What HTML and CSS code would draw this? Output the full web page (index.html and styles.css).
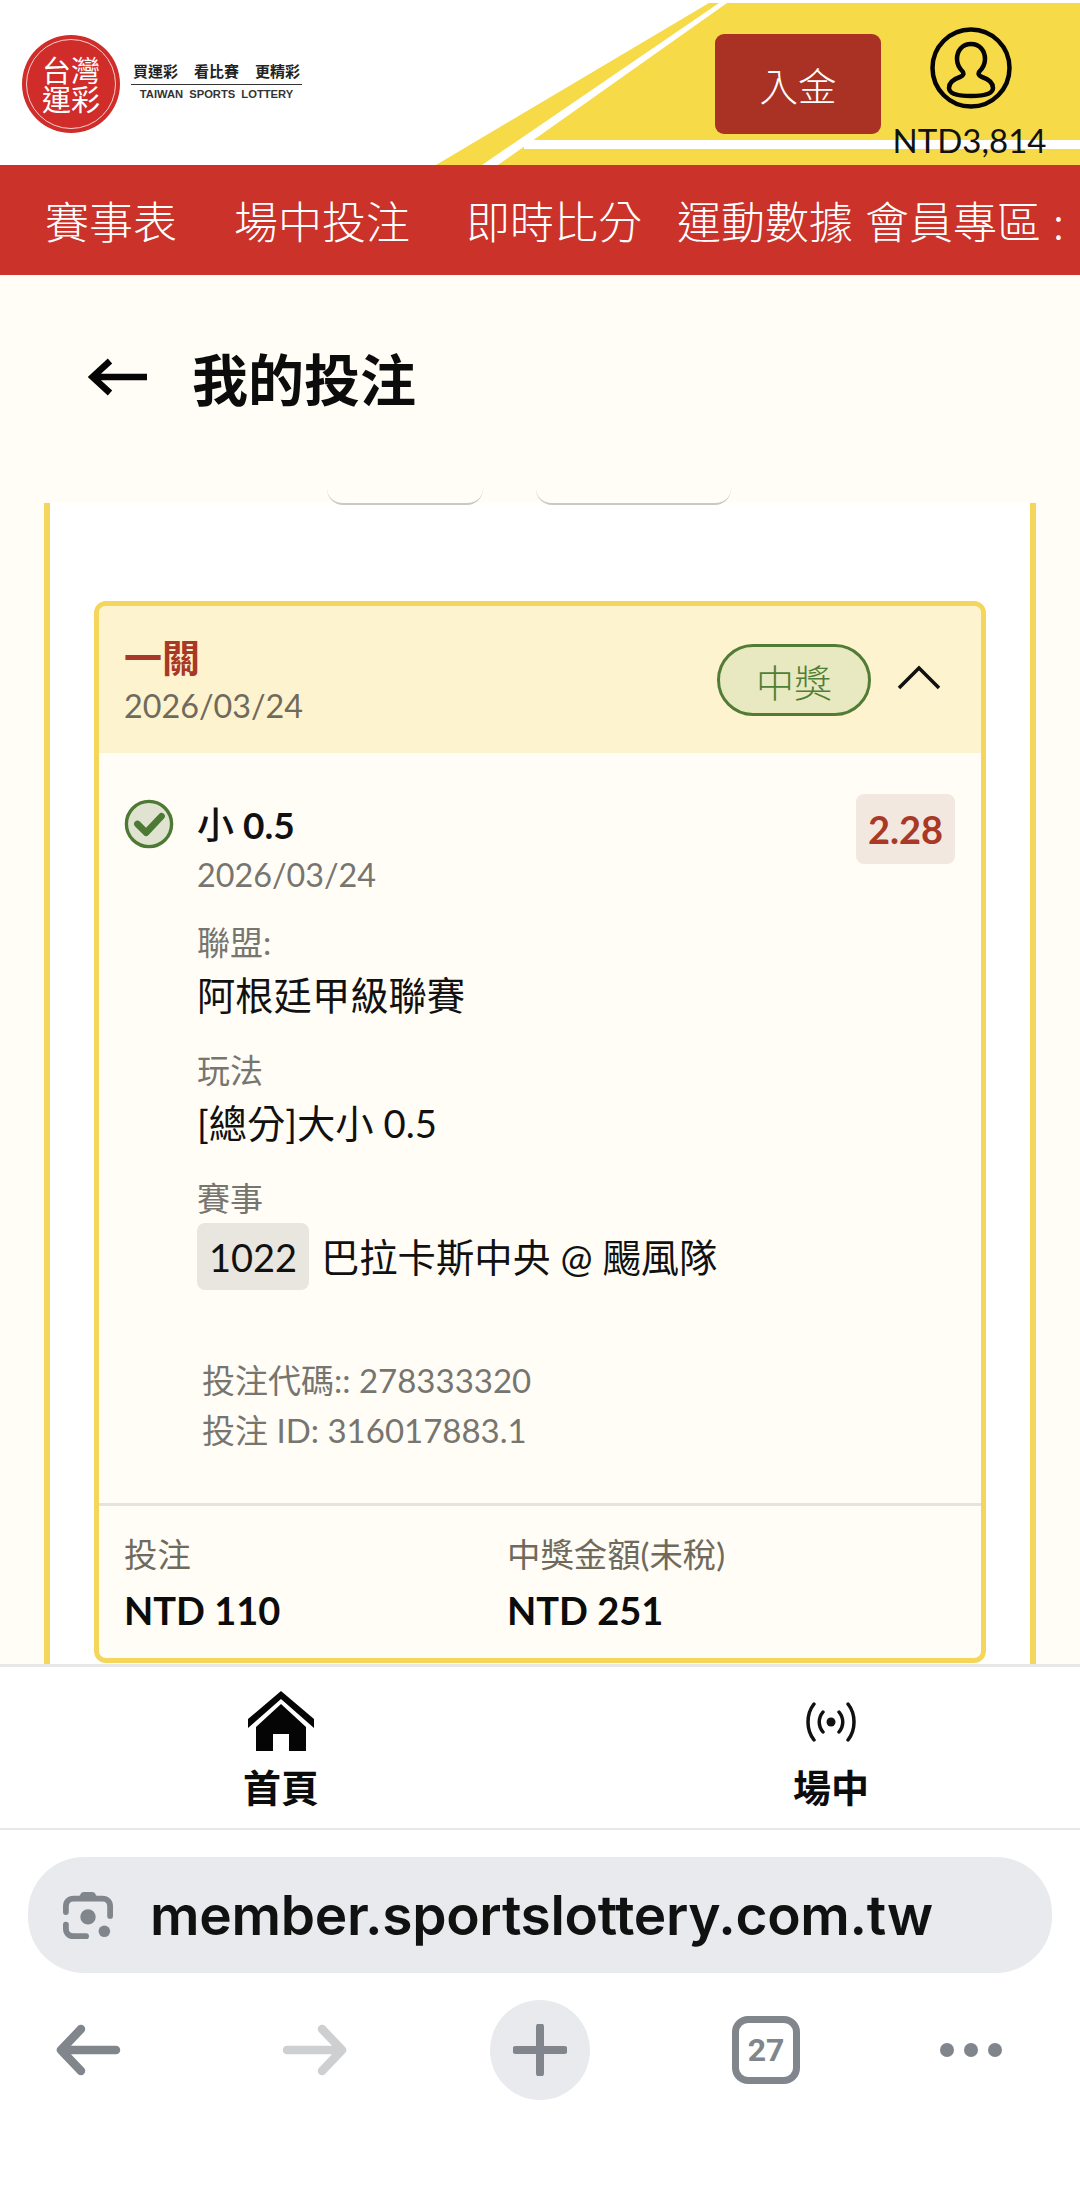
FILE: index.html
```html
<!DOCTYPE html>
<html lang="zh-Hant">
<head>
<meta charset="utf-8">
<title>我的投注</title>
<link rel="stylesheet" href="styles.css">
</head>
<body>
<div class="page">
  <header class="topbar">
    <svg class="topbar-bg" viewBox="0 0 1080 165" aria-hidden="true">
      <polygon points="436,165 709,3 1080,3 1080,165" fill="#f7da47"/>
      <polygon points="482,165 719,3 727,3 498,165" fill="#fff"/>
      <rect x="524" y="140" width="556" height="9" fill="#fff"/>
    </svg>
    <div class="logo">
      <div class="seal"><div class="seal-ring">台灣<br>運彩</div></div>
      <div class="tagline">
        <div class="tag-zh"><span>買運彩</span><span>看比賽</span><span>更精彩</span></div>
        <div class="tag-en">TAIWAN SPORTS LOTTERY</div>
      </div>
    </div>
    <button class="deposit">入金</button>
    <div class="account">
      <svg class="avatar" viewBox="0 0 82 82" aria-hidden="true">
        <circle cx="41" cy="41" r="38.5" fill="none" stroke="#050505" stroke-width="4.5"/>
        <path d="M41 17c-9 0-14 7-14 15 0 6 3 10 6 13 1 2 0 4-3 5-6 2-11 6-11 11 0 6 10 8 22 8s22-2 22-8c0-5-5-9-11-11-3-1-4-3-3-5 3-3 6-7 6-13 0-8-5-15-14-15z" fill="none" stroke="#050505" stroke-width="4.5"/>
      </svg>
      <div class="balance">NTD3,814</div>
    </div>
  </header>

  <nav class="mainnav">
    <span class="nav-1">賽事表</span>
    <span class="nav-2">場中投注</span>
    <span class="nav-3">即時比分</span>
    <span class="nav-4">運動數據</span>
    <span class="nav-5">會員專區</span>
    <span class="nav-6">:</span>
  </nav>

  <section class="pagehead">
    <svg class="backarrow" viewBox="0 0 60 40" aria-hidden="true"><path d="M59 19H7M22 3 4.5 19 22 35" fill="none" stroke="#050505" stroke-width="6.5"/></svg>
    <h1>我的投注</h1>
    <div class="tab tab-a"></div>
    <div class="tab tab-b"></div>
  </section>

  <main class="panel">
    <article class="ticket">
      <div class="ticket-head">
        <div>
          <div class="kind">一關</div>
          <div class="date head-date">2026/03/24</div>
        </div>
        <div class="head-right">
          <span class="pill">中獎</span>
          <svg class="chevron" viewBox="0 0 44 26" aria-hidden="true"><path d="M2 23 22 3l20 20" fill="none" stroke="#111" stroke-width="3.5"/></svg>
        </div>
      </div>
      <div class="ticket-body">
        <div class="pick">
          <svg class="check" viewBox="0 0 52 52" aria-hidden="true">
            <circle cx="26" cy="26" r="23.5" fill="#dfe3cf" stroke="#4c7a35" stroke-width="3.5"/>
            <path d="M14 26l9 9 16-17" fill="none" stroke="#4c7a35" stroke-width="7" stroke-linecap="round" stroke-linejoin="round"/>
          </svg>
          <div class="pick-main">
            <div class="pick-row">
              <div>
                <div class="pick-title"><span class="pick-zh">小</span> 0.5</div>
                <div class="date pick-date">2026/03/24</div>
              </div>
              <div class="odds">2.28</div>
            </div>
            <div class="label first">聯盟:</div>
            <div class="value">阿根廷甲級聯賽</div>
            <div class="label">玩法</div>
            <div class="value">[總分]大小 0.5</div>
            <div class="label">賽事</div>
            <div class="match"><span class="code">1022</span><span class="match-name">巴拉卡斯中央 @ 颺風隊</span></div>
          </div>
        </div>
        <div class="ids">
          <div>投注代碼:: 278333320</div>
          <div>投注 ID: 316017883.1</div>
        </div>
      </div>
      <div class="ticket-foot">
        <div class="foot-col">
          <div class="foot-label">投注</div>
          <div class="foot-value">NTD 110</div>
        </div>
        <div class="foot-col">
          <div class="foot-label">中獎金額(未稅)</div>
          <div class="foot-value">NTD 251</div>
        </div>
      </div>
    </article>
  </main>

  <nav class="tabbar">
    <div class="tabitem">
      <svg class="home" viewBox="0 0 68 60" aria-hidden="true">
        <path d="M34 0 67 28v9L34 8 1 37v-9z" fill="#050505"/>
        <path d="M34 13 59 36v24H42V43H26v17H9V36z" fill="#050505"/>
      </svg>
      <span>首頁</span>
    </div>
    <div class="tabitem">
      <svg class="live" viewBox="0 0 52 40" aria-hidden="true">
        <circle cx="26" cy="20" r="4.5" fill="#111"/>
        <path d="M18 10c-5 6-5 14 0 20M34 10c5 6 5 14 0 20M9 2C1 12 1 28 9 38M43 2c8 10 8 26 0 36" fill="none" stroke="#111" stroke-width="3.5" stroke-linecap="round"/>
      </svg>
      <span>場中</span>
    </div>
  </nav>

  <div class="browser">
    <div class="urlbar">
      <svg class="lens" viewBox="0 0 52 50" aria-hidden="true">
        <path d="M3 22v-6c0-5 3-8 8-8h30c5 0 8 3 8 8v10M3 35v4c0 5 3 8 8 8h13" fill="none" stroke="#80868b" stroke-width="6" stroke-linecap="round"/>
        <path d="M15 9l4-7q1-1 3-1h8q2 0 3 1l4 7z" fill="#80868b"/>
        <circle cx="26" cy="27" r="8" fill="#80868b"/>
        <circle cx="43" cy="42" r="6" fill="#80868b"/>
      </svg>
      <span>member.sportslottery.com.tw</span>
    </div>
    <div class="toolbar">
      <svg class="tool-arrow back" viewBox="0 0 66 52" aria-hidden="true"><path d="M61 26H7M26 5 6 26l20 21" fill="none" stroke="#80868b" stroke-width="8.5" stroke-linecap="round" stroke-linejoin="round"/></svg>
      <svg class="tool-arrow" viewBox="0 0 66 52" aria-hidden="true"><path d="M5 26h54M40 5l20 21-20 21" fill="none" stroke="#cdcfd0" stroke-width="8.5" stroke-linecap="round" stroke-linejoin="round"/></svg>
      <div class="newtab"><svg viewBox="0 0 54 52" aria-hidden="true"><path d="M27 3v46M3 26h48" fill="none" stroke="#80868b" stroke-width="8" stroke-linecap="round"/></svg></div>
      <div class="tabs-count">27</div>
      <div class="more"><i></i><i></i><i></i></div>
    </div>
  </div>
</div>
</body>
</html>
```

FILE: styles.css
```css
* { box-sizing: border-box; }
html, body { margin: 0; padding: 0; }
body { background: #fff; font-family: Lato, "Noto Sans CJK TC", sans-serif; color: #111; }
.page { width: 1080px; height: 2207px; display: flex; flex-direction: column; overflow: hidden; }

.topbar { position: relative; height: 165px; flex: none; display: flex; align-items: flex-start; background: #fff; }
.topbar-bg { position: absolute; inset: 0; width: 1080px; height: 165px; }
.logo { position: relative; display: flex; align-items: center; gap: 11px; margin: 35px 0 0 22px; }
.seal { width: 98px; height: 98px; border-radius: 50%; background: #d02c2a; padding: 4px; }
.seal-ring { width: 100%; height: 100%; border: 1.5px solid #f3d2cf; border-radius: 50%; display: flex; flex-direction: column; align-items: center; justify-content: center; text-align: center; color: #fff; font-family: "Noto Sans CJK TC", sans-serif; font-size: 29px; line-height: 29px; }
.tagline { width: 171px; display: flex; flex-direction: column; align-items: center; margin-bottom: 4px; }
.tag-zh { display: flex; gap: 16px; font-family: "Noto Sans CJK TC", sans-serif; font-weight: 700; font-size: 15px; line-height: 20px; padding-bottom: 3px; width: 100%; justify-content: center; border-bottom: 1px solid #333; color: #222; }
.tag-en { font-family: "Liberation Sans", sans-serif; font-weight: 700; font-size: 11.2px; line-height: 18px; word-spacing: 3px; color: #333; white-space: nowrap; }
.deposit { position: relative; margin: 34px 0 0 413px; width: 166px; height: 100px; border: 0; border-radius: 9px; background: #a93224; color: #fff; font-family: "Noto Sans CJK TC", sans-serif; font-size: 38.5px; font-weight: 300; padding: 0; }
.account { position: relative; margin: 27px 0 0 0; width: 180px; flex: none; display: flex; flex-direction: column; align-items: center; }
.avatar { width: 82px; height: 82px; }
.balance { font-size: 33px; line-height: 36px; margin: 13px 3px 0 0; color: #111; white-space: nowrap; }

.mainnav { position: relative; height: 110px; flex: none; background: #cb3229; color: #fff; font-family: "Noto Sans CJK TC", sans-serif; font-size: 44px; font-weight: 300; display: flex; align-items: center; white-space: nowrap; padding-left: 45px; overflow: hidden; }
.nav-2 { margin-left: 57px; }
.nav-3 { margin-left: 56px; }
.nav-4 { margin-left: 35px; }
.nav-5 { margin-left: 12px; }
.nav-6 { margin-left: 12px; }

.pagehead { position: relative; height: 228px; flex: none; background: #fffdf6; display: flex; align-items: flex-start; z-index: 1; }
.backarrow { width: 60px; height: 40px; margin: 83px 0 0 88px; }
.pagehead h1 { margin: 68px 0 0 44px; font-family: "Noto Sans CJK TC", sans-serif; font-size: 56px; line-height: 68px; font-weight: 700; color: #0c0c0c; }
.tab { position: absolute; bottom: -2px; height: 30px; background: #fffdf6; border-bottom: 2px solid #cbc9c4; border-radius: 0 0 16px 16px; }
.tab-a { left: 327px; width: 156px; }
.tab-b { left: 536px; width: 195px; }

.panel { position: relative; height: 1161px; flex: none; background: #fffdf6; overflow: hidden; }
.panel::before { content: ""; position: absolute; top: 0; bottom: 0; left: 44px; right: 44px; background: #fff; border-left: 6px solid #f5d65c; border-right: 6px solid #f5d65c; }
.ticket { position: relative; margin: 98px 94px 0; height: 1062px; border: 5px solid #f5d65c; border-radius: 12px; background: #fffdf6; overflow: hidden; display: flex; flex-direction: column; }
.ticket-head { height: 147px; flex: none; background: #fdf3cf; padding: 28px 40px 0 25px; display: flex; justify-content: space-between; align-items: flex-start; }
.kind { font-family: "Noto Sans CJK TC", sans-serif; font-size: 38px; line-height: 44px; font-weight: 700; color: #a93826; }
.date { font-size: 32.3px; line-height: 44px; color: #77756f; }
.head-date { margin-top: 6px; color: #6f6a5c; }
.head-right { display: flex; align-items: center; gap: 26px; margin-top: 10px; }
.pill { width: 154px; height: 72px; border: 3px solid #527c36; border-radius: 36px; background: #e8e9c0; color: #4f7e36; font-family: "Noto Sans CJK TC", sans-serif; font-size: 38px; font-weight: 300; display: flex; align-items: center; justify-content: center; }
.chevron { width: 44px; height: 26px; margin-top: -4px; }

.ticket-body { flex: 1; min-height: 0; padding: 0 26px 0 25px; }
.pick { display: flex; gap: 23px; margin-top: 46px; }
.check { width: 50px; height: 50px; flex: none; }
.pick-main { flex: 1; min-width: 0; }
.pick-row { display: flex; justify-content: space-between; align-items: flex-start; }
.pick-title { font-size: 37px; line-height: 48px; font-weight: 700; color: #111; margin-top: 0; }
.pick-zh { font-family: "Noto Sans CJK TC", sans-serif; font-weight: 500; }
.pick-date { margin-top: 4px; }
.odds { width: 99px; height: 70px; border-radius: 8px; background: #f3e8e0; color: #a93826; font-size: 38px; font-weight: 700; display: flex; align-items: center; justify-content: center; margin-top: -5px; }
.label { font-size: 33px; line-height: 44px; color: #77756f; font-weight: 400; margin-top: 27px; }
.label.first { margin-top: 23px; }
.value { font-size: 38.3px; line-height: 52px; color: #111; margin-top: 5px; }
.match { display: flex; align-items: center; gap: 12px; margin-top: 3px; }
.match-name { font-size: 38.3px; line-height: 52px; color: #111; white-space: nowrap; }
.code { width: 112px; height: 67px; border-radius: 8px; background: #e8e6df; font-size: 38px; display: flex; align-items: center; justify-content: center; color: #111; }
.ids { margin: 66px 0 0 78px; font-size: 33px; line-height: 49.5px; color: #77756f; font-weight: 400; }

.ticket-foot { height: 155px; flex: none; display: grid; grid-template-columns: 383px 1fr; border-top: 3px solid #e6e4de; padding: 24px 25px 0; }
.foot-label { font-size: 33.4px; line-height: 48px; color: #6f6a5c; font-weight: 400; }
.foot-value { font-size: 38px; line-height: 50px; font-weight: 700; color: #0c0c0c; margin-top: 7px; }

.tabbar { height: 166px; flex: none; display: grid; grid-template-columns: 562px 1fr; background: #fff; border-top: 3px solid #e8e8e8; border-bottom: 2px solid #e8e8e8; }
.tabitem { display: flex; flex-direction: column; align-items: center; font-family: "Noto Sans CJK TC", sans-serif; font-size: 38px; font-weight: 700; color: #0c0c0c; line-height: 44px; }
.tabitem span { margin-top: 13px; }
.home { width: 68px; height: 60px; margin-top: 24px; }
.live { width: 52px; height: 40px; margin-top: 35px; margin-bottom: 9px; }
.tabitem:last-child { padding-left: 20px; }

.browser { flex: 1; background: #fff; padding: 27px 28px 0; }
.urlbar { height: 116px; border-radius: 56px; background: #e8eaed; display: flex; align-items: center; padding-left: 35px; gap: 37px; }
.lens { width: 50px; height: 50px; flex: none; }
.urlbar span { font-family: Inter, Roboto, sans-serif; font-size: 55px; font-weight: 600; letter-spacing: -0.3px; color: #111; white-space: nowrap; }
.toolbar { display: grid; grid-template-columns: 282px 208px 242px 208px 1fr; margin: 25px -28px 0; align-items: center; height: 104px; }
.tool-arrow { width: 66px; height: 52px; }
.tool-arrow.back { margin-left: 55px; }
.newtab { width: 100px; height: 100px; border-radius: 50%; background: #e8eaed; display: flex; align-items: center; justify-content: center; }
.newtab svg { width: 54px; height: 52px; }
.tabs-count { width: 68px; height: 68px; border: 7px solid #80868b; border-radius: 16px; color: #80868b; font-family: Roboto, sans-serif; font-weight: 700; font-size: 32px; display: flex; align-items: center; justify-content: center; }
.more { display: flex; gap: 10px; }
.more i { width: 14px; height: 14px; border-radius: 50%; background: #80868b; display: block; }
```
